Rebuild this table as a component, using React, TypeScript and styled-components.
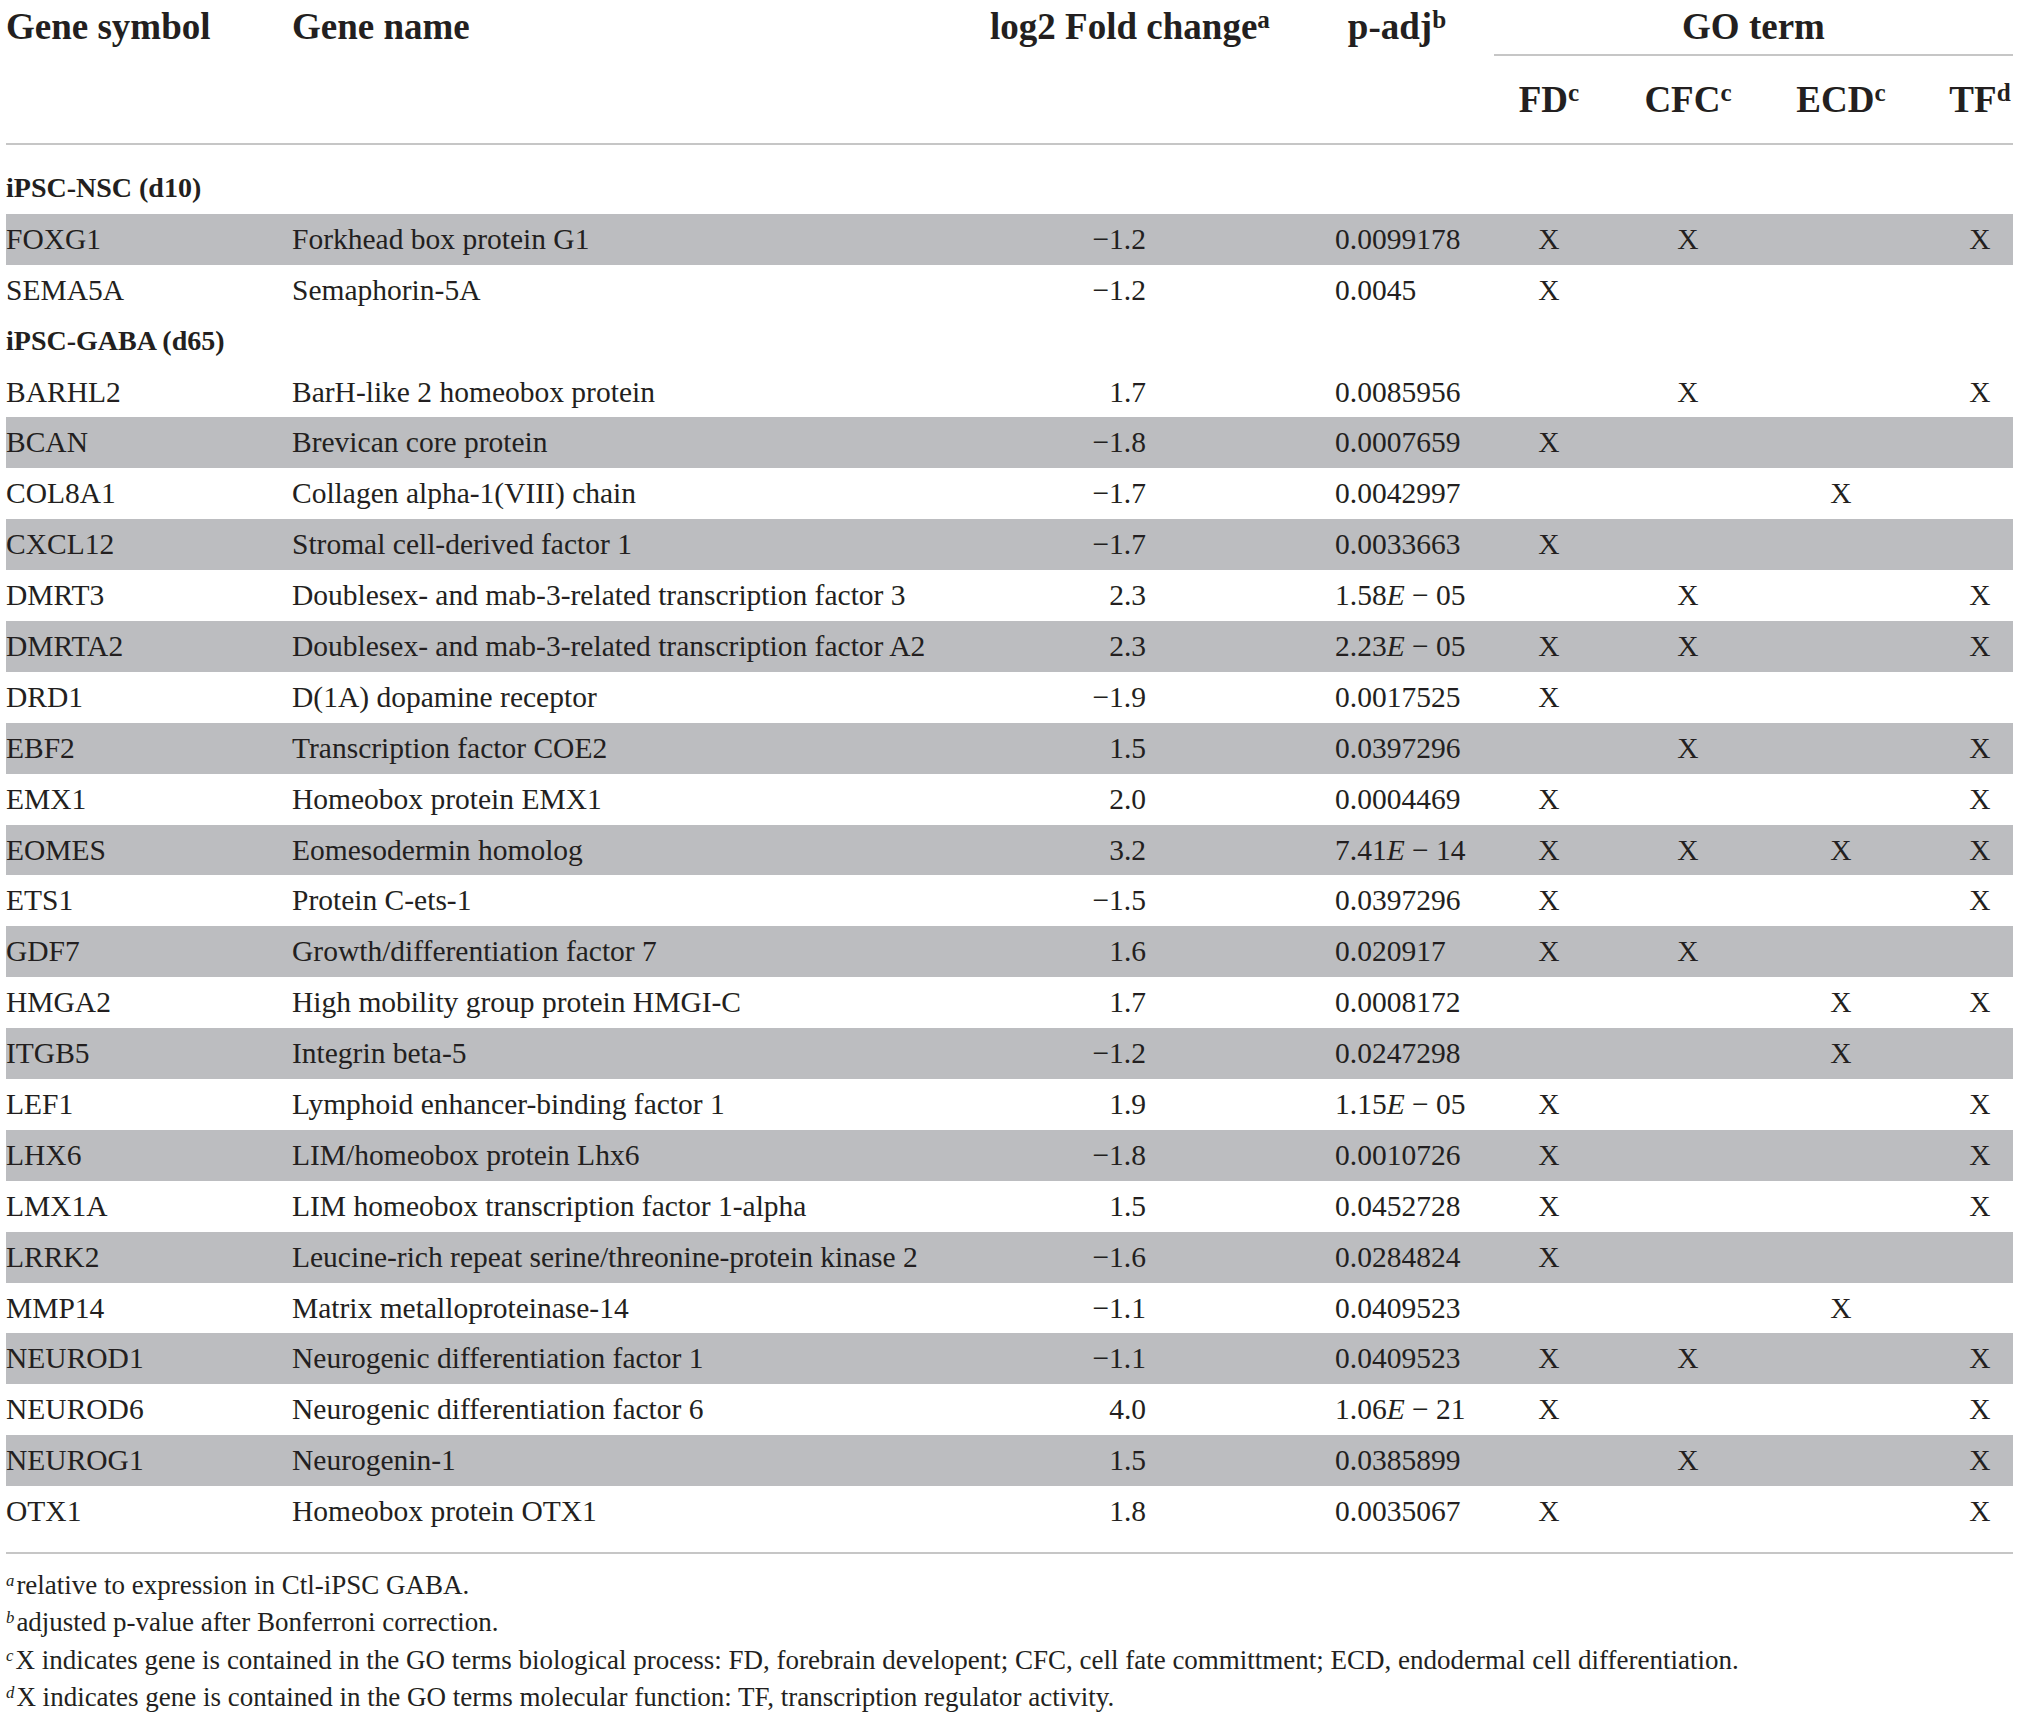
import React from 'react'
import styled, { createGlobalStyle } from 'styled-components'

const GlobalStyle = createGlobalStyle`
  html, body {
    margin: 0;
    padding: 0;
    background: #ffffff;
  }
  body {
    font-family: "Liberation Serif", "Times New Roman", serif;
    color: #231f20;
  }
`

// symbol | name | log2 | p-adj | FD | CFC | ECD | TF
const COLS = '286px 668px 340px 194px 110px 168px 138px 103px'
const RULE = '#c6c6c6'
const SHADE = '#bcbdc0'

type Row =
  | { kind: 'group'; label: string }
  | {
      kind: 'gene'
      symbol: string
      name: string
      fold: string
      padj: string
      go: [boolean, boolean, boolean, boolean]
    }

const g = (
  symbol: string,
  name: string,
  fold: string,
  padj: string,
  fd: number,
  cfc: number,
  ecd: number,
  tf: number
): Row => ({ kind: 'gene', symbol, name, fold, padj, go: [!!fd, !!cfc, !!ecd, !!tf] })

const rows: Row[] = [
  { kind: 'group', label: 'iPSC-NSC (d10)' },
  g('FOXG1', 'Forkhead box protein G1', '−1.2', '0.0099178', 1, 1, 0, 1),
  g('SEMA5A', 'Semaphorin-5A', '−1.2', '0.0045', 1, 0, 0, 0),
  { kind: 'group', label: 'iPSC-GABA (d65)' },
  g('BARHL2', 'BarH-like 2 homeobox protein', '1.7', '0.0085956', 0, 1, 0, 1),
  g('BCAN', 'Brevican core protein', '−1.8', '0.0007659', 1, 0, 0, 0),
  g('COL8A1', 'Collagen alpha-1(VIII) chain', '−1.7', '0.0042997', 0, 0, 1, 0),
  g('CXCL12', 'Stromal cell-derived factor 1', '−1.7', '0.0033663', 1, 0, 0, 0),
  g('DMRT3', 'Doublesex- and mab-3-related transcription factor 3', '2.3', '1.58E−05', 0, 1, 0, 1),
  g('DMRTA2', 'Doublesex- and mab-3-related transcription factor A2', '2.3', '2.23E−05', 1, 1, 0, 1),
  g('DRD1', 'D(1A) dopamine receptor', '−1.9', '0.0017525', 1, 0, 0, 0),
  g('EBF2', 'Transcription factor COE2', '1.5', '0.0397296', 0, 1, 0, 1),
  g('EMX1', 'Homeobox protein EMX1', '2.0', '0.0004469', 1, 0, 0, 1),
  g('EOMES', 'Eomesodermin homolog', '3.2', '7.41E−14', 1, 1, 1, 1),
  g('ETS1', 'Protein C-ets-1', '−1.5', '0.0397296', 1, 0, 0, 1),
  g('GDF7', 'Growth/differentiation factor 7', '1.6', '0.020917', 1, 1, 0, 0),
  g('HMGA2', 'High mobility group protein HMGI-C', '1.7', '0.0008172', 0, 0, 1, 1),
  g('ITGB5', 'Integrin beta-5', '−1.2', '0.0247298', 0, 0, 1, 0),
  g('LEF1', 'Lymphoid enhancer-binding factor 1', '1.9', '1.15E−05', 1, 0, 0, 1),
  g('LHX6', 'LIM/homeobox protein Lhx6', '−1.8', '0.0010726', 1, 0, 0, 1),
  g('LMX1A', 'LIM homeobox transcription factor 1-alpha', '1.5', '0.0452728', 1, 0, 0, 1),
  g('LRRK2', 'Leucine-rich repeat serine/threonine-protein kinase 2', '−1.6', '0.0284824', 1, 0, 0, 0),
  g('MMP14', 'Matrix metalloproteinase-14', '−1.1', '0.0409523', 0, 0, 1, 0),
  g('NEUROD1', 'Neurogenic differentiation factor 1', '−1.1', '0.0409523', 1, 1, 0, 1),
  g('NEUROD6', 'Neurogenic differentiation factor 6', '4.0', '1.06E−21', 1, 0, 0, 1),
  g('NEUROG1', 'Neurogenin-1', '1.5', '0.0385899', 0, 1, 0, 1),
  g('OTX1', 'Homeobox protein OTX1', '1.8', '0.0035067', 1, 0, 0, 1),
]

const Page = styled.div`
  width: 2007px;
  padding: 0 6px;
`

const Head = styled.div`
  display: grid;
  grid-template-columns: ${COLS};
  grid-template-rows: 56px 87px;
  border-bottom: 2px solid ${RULE};
  font-size: 37px;
  font-weight: 700;
`

const HeadCell = styled.div<{ $col: number; $align: 'left' | 'center' }>`
  grid-column: ${(p) => p.$col};
  grid-row: 1 / 3;
  line-height: 53px;
  text-align: ${(p) => p.$align};
  white-space: nowrap;
`

const GoHead = styled.div`
  grid-column: 5 / 9;
  grid-row: 1;
  line-height: 53px;
  text-align: center;
  border-bottom: 2px solid ${RULE};
`

const GoSub = styled.div<{ $col: number; $shift?: number }>`
  grid-column: ${(p) => p.$col};
  grid-row: 2;
  line-height: 87px;
  text-align: center;
  padding-left: ${(p) => p.$shift ?? 0}px;
  white-space: nowrap;
`

const Sup = styled.sup`
  font-size: 0.68em;
  line-height: 0;
  vertical-align: 0.42em;
`

const Body = styled.div`
  padding: 18px 0 15px;
  border-bottom: 2px solid ${RULE};
`

const TableRow = styled.div<{ $shaded?: boolean }>`
  display: grid;
  grid-template-columns: ${COLS};
  align-items: center;
  height: 50.9px;
  font-size: 29.5px;
  background: ${(p) => (p.$shaded ? SHADE : 'transparent')};
`

const GroupLabel = styled.div`
  grid-column: 1 / 9;
  font-size: 28px;
  font-weight: 700;
`

const Cell = styled.div<{ $align?: 'left' | 'right' | 'center'; $pl?: number; $pr?: number }>`
  text-align: ${(p) => p.$align ?? 'left'};
  padding-left: ${(p) => p.$pl ?? 0}px;
  padding-right: ${(p) => p.$pr ?? 0}px;
  white-space: nowrap;
`

const Notes = styled.div`
  padding-top: 13px;
  font-size: 27px;
  line-height: 37.4px;
`

const Note = styled.div`
  white-space: nowrap;
`

const NoteMark = styled.sup`
  font-style: italic;
  font-size: 0.62em;
  line-height: 0;
  vertical-align: 0.5em;
  padding-right: 2px;
`

const Sci = ({ value }: { value: string }) => {
  const m = value.match(/^([\d.]+)E−(\d+)$/)
  if (!m) return <>{value}</>
  return (
    <>
      {m[1]}
      <i>E</i> − {m[2]}
    </>
  )
}

const goShift = [0, 0, 0, 37]

export default function App() {
  return (
    <Page>
      <GlobalStyle />
      <Head>
        <HeadCell $col={1} $align="left">Gene symbol</HeadCell>
        <HeadCell $col={2} $align="left">Gene name</HeadCell>
        <HeadCell $col={3} $align="center">
          log2 Fold change<Sup>a</Sup>
        </HeadCell>
        <HeadCell $col={4} $align="center">
          p-adj<Sup>b</Sup>
        </HeadCell>
        <GoHead>GO term</GoHead>
        <GoSub $col={5}>
          FD<Sup>c</Sup>
        </GoSub>
        <GoSub $col={6}>
          CFC<Sup>c</Sup>
        </GoSub>
        <GoSub $col={7}>
          ECD<Sup>c</Sup>
        </GoSub>
        <GoSub $col={8} $shift={37}>
          TF<Sup>d</Sup>
        </GoSub>
      </Head>

      <Body>
        {rows.map((r, i) => {
          if (r.kind === 'group') {
            return (
              <TableRow key={i}>
                <GroupLabel>{r.label}</GroupLabel>
              </TableRow>
            )
          }
          // every second line of the body is banded (labels never are)
          const shaded = i % 2 === 1
          return (
            <TableRow key={i} $shaded={shaded}>
              <Cell>{r.symbol}</Cell>
              <Cell>{r.name}</Cell>
              <Cell $align="right" $pr={154}>
                {r.fold}
              </Cell>
              <Cell $pl={35}>
                <Sci value={r.padj} />
              </Cell>
              {r.go.map((on, k) => (
                <Cell key={k} $align="center" $pl={goShift[k]}>
                  {on ? 'X' : ''}
                </Cell>
              ))}
            </TableRow>
          )
        })}
      </Body>

      <Notes>
        <Note>
          <NoteMark>a</NoteMark>relative to expression in Ctl-iPSC GABA.
        </Note>
        <Note>
          <NoteMark>b</NoteMark>adjusted p-value after Bonferroni correction.
        </Note>
        <Note>
          <NoteMark>c</NoteMark>X indicates gene is contained in the GO terms biological process: FD, forebrain
          developent; CFC, cell fate committment; ECD, endodermal cell differentiation.
        </Note>
        <Note>
          <NoteMark>d</NoteMark>X indicates gene is contained in the GO terms molecular function: TF, transcription
          regulator activity.
        </Note>
      </Notes>
    </Page>
  )
}
